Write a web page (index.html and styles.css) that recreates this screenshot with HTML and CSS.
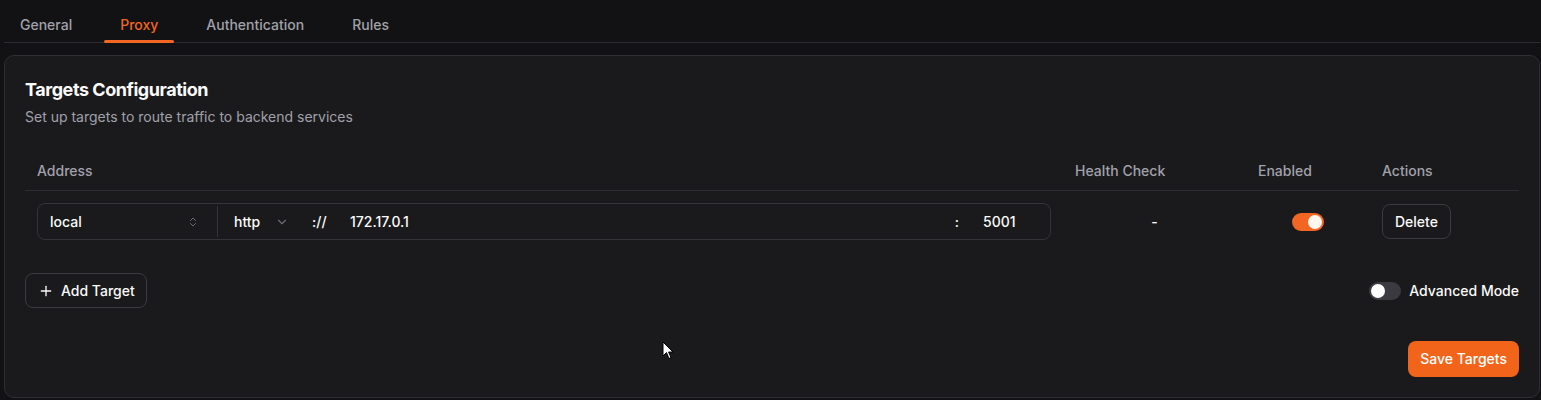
FILE: index.html
```html
<!DOCTYPE html>
<html lang="en">
<head>
<meta charset="utf-8">
<title>Proxy</title>
<link rel="stylesheet" href="styles.css">
</head>
<body>
<div class="page">
  <nav class="tabs">
    <a class="tab">General</a>
    <a class="tab active">Proxy</a>
    <a class="tab">Authentication</a>
    <a class="tab">Rules</a>
  </nav>

  <section class="card">
    <header class="card-head">
      <h2 class="title">Targets Configuration</h2>
      <p class="subtitle">Set up targets to route traffic to backend services</p>
    </header>

    <div class="table">
      <div class="thead">
        <div class="th">Address</div>
        <div class="th">Health Check</div>
        <div class="th">Enabled</div>
        <div class="th">Actions</div>
      </div>
      <div class="trow">
        <div class="td">
          <div class="addr">
            <div class="sel-site">
              <span>local</span>
              <svg class="ico-updown" viewBox="0 0 24 24" fill="none" stroke="currentColor" stroke-width="2" stroke-linecap="round" stroke-linejoin="round"><path d="m7 15 5 5 5-5"/><path d="m7 9 5-5 5 5"/></svg>
            </div>
            <div class="divider"></div>
            <div class="sel-proto">
              <span>http</span>
              <svg class="ico-down" viewBox="0 0 24 24" fill="none" stroke="currentColor" stroke-width="2" stroke-linecap="round" stroke-linejoin="round"><path d="m6 9 6 6 6-6"/></svg>
            </div>
            <span class="sep">://</span>
            <span class="host">172.17.0.1</span>
            <span class="colon">:</span>
            <span class="port">5001</span>
          </div>
        </div>
        <div class="td center">-</div>
        <div class="td center"><span class="switch on"><span class="knob"></span></span></div>
        <div class="td"><button class="btn">Delete</button></div>
      </div>
    </div>

    <div class="tools">
      <button class="btn btn-add">
        <svg class="ico-plus" viewBox="0 0 24 24" fill="none" stroke="currentColor" stroke-width="2" stroke-linecap="round"><path d="M5 12h14"/><path d="M12 5v14"/></svg>
        Add Target
      </button>
      <label class="adv">
        <span class="switch"><span class="knob"></span></span>
        <span>Advanced Mode</span>
      </label>
    </div>

    <div class="footer">
      <button class="btn-primary">Save Targets</button>
    </div>
  </section>

  <svg class="cursor" viewBox="0 0 12 19" width="12" height="19"><path d="M1 1 V15 L4.5 11.6 L7 17.5 L9 16.6 L6.6 11 H11 Z" fill="#fff" stroke="#000" stroke-width="1"/></svg>
</div>
</body>
</html>
```

FILE: styles.css
```css
* { box-sizing: border-box; }
html, body {
  margin: 0;
  padding: 0;
  background: #121214;
  color: #fafafa;
  font-family: Inter, "Noto Sans", "Liberation Sans", sans-serif;
  font-size: 14px;
  line-height: 20px;
}
.page {
  position: relative;
  padding: 0 1px 0 4px;
  height: 400px;
}
.tabs {
  display: flex;
  gap: 16px;
  height: 43px;
  border-bottom: 1px solid #2c2c30;
}
.tab {
  position: relative;
  padding: 15px 16px 7px;
  color: #a1a1aa;
  font-weight: 500;
  cursor: pointer;
}
.tab.active { color: #f26522; }
.tab.active::after {
  content: "";
  position: absolute;
  left: 0; right: 0; bottom: -1px;
  height: 3px;
  border-radius: 2px;
  background: #f26522;
}
.card {
  margin-top: 12px;
  background: #1a1a1c;
  border: 1px solid #2e2e33;
  border-radius: 10px;
  padding: 20px;
}
.title {
  margin: 0;
  font-size: 18px;
  line-height: 28px;
  font-weight: 700;
  letter-spacing: -0.45px;
}
.subtitle {
  margin: 3px 0 0;
  color: #a1a1aa;
  font-size: 14px;
  line-height: 20px;
}
.table { margin-top: 23px; }
.thead, .trow {
  display: grid;
  grid-template-columns: 1038px 183px 124px 1fr;
}
.thead {
  height: 41px;
  padding-top: 1px;
  border-bottom: 1px solid #2e2e33;
}
.th {
  padding: 0 12px;
  display: flex;
  align-items: center;
  color: #a1a1aa;
  font-weight: 500;
}
.td {
  padding: 12px;
  display: flex;
  align-items: center;
}
.td.center { justify-content: center; font-weight: 500; }
.addr {
  flex: 1;
  display: flex;
  align-items: center;
  height: 37px;
  border: 1px solid #34343a;
  border-radius: 8px;
  font-weight: 500;
}
.sel-site {
  width: 179px;
  display: flex;
  align-items: center;
  justify-content: space-between;
  padding: 0 18px 0 12px;
}
.ico-updown { width: 12px; height: 12px; color: #6b6b73; }
.ico-down { width: 14px; height: 14px; color: #6b6b73; }
.divider { width: 1px; height: 31px; background: #34343a; }
.sel-proto {
  display: flex;
  align-items: center;
  gap: 15px;
  padding-left: 16px;
  width: 94px;
}
.sep { width: 38px; }
.host { flex: 1; }
.colon { padding-right: 24px; }
.port { width: 67px; }
.switch {
  position: relative;
  display: inline-block;
  width: 32px;
  height: 18px;
  border-radius: 9px;
  background: #3a3a40;
}
.switch .knob {
  position: absolute;
  top: 2px; left: 2px;
  width: 14px; height: 14px;
  border-radius: 50%;
  background: #fff;
}
.switch.on { background: #f26522; }
.switch.on .knob { left: 16px; background: #fff7ed; }
.btn {
  height: 35px;
  padding: 0 12px;
  background: transparent;
  color: #fafafa;
  border: 1px solid #3a3a40;
  border-radius: 8px;
  font: inherit;
  font-weight: 500;
  display: inline-flex;
  align-items: center;
}
.tools {
  margin-top: 21px;
  display: flex;
  justify-content: space-between;
  align-items: center;
}
.btn-add { padding: 0 11px 0 12px; gap: 7px; }
.ico-plus { width: 16px; height: 16px; }
.adv {
  display: flex;
  align-items: center;
  gap: 8px;
  font-weight: 500;
}
.footer {
  margin-top: 33px;
  display: flex;
  justify-content: flex-end;
}
.btn-primary {
  height: 36px;
  padding: 0 12px;
  background: #f26419;
  color: #fff;
  border: none;
  border-radius: 8px;
  font: inherit;
  font-weight: 500;
}
.cursor {
  position: absolute;
  left: 662px;
  top: 341px;
}
```
